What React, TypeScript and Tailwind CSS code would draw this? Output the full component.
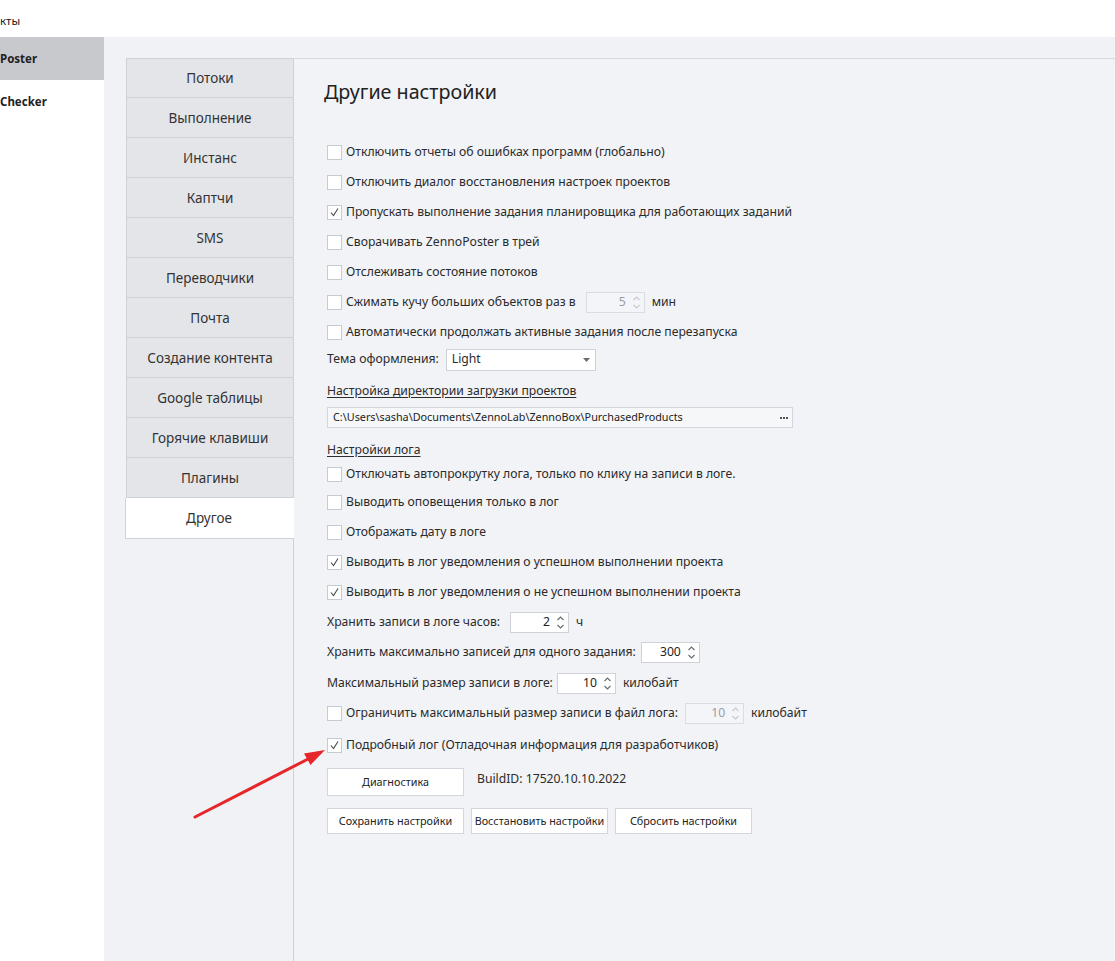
import React from 'react';

const font = { fontFamily: '"Noto Sans", "Open Sans", sans-serif' };

const tabs = [
  'Потоки',
  'Выполнение',
  'Инстанс',
  'Каптчи',
  'SMS',
  'Переводчики',
  'Почта',
  'Создание контента',
  'Google таблицы',
  'Горячие клавиши',
  'Плагины',
];

const CheckBox: React.FC<{ checked?: boolean }> = ({ checked }) => (
  <span className="w-[15px] h-[15px] bg-white border border-[#c6cad2] flex items-center justify-center shrink-0">
    {checked && (
      <svg width="11" height="11" viewBox="0 0 11 11">
        <polyline points="2,5.5 4.5,8.5 9,1.5" fill="none" stroke="#4a4a4a" strokeWidth="1.1" />
      </svg>
    )}
  </span>
);

const CheckRow: React.FC<{ label: string; checked?: boolean; children?: React.ReactNode }> = ({
  label,
  checked,
  children,
}) => (
  <div className="h-[30px] flex items-center">
    <CheckBox checked={checked} />
    <span className="ml-[4px]">{label}</span>
    {children}
  </div>
);

const Spin: React.FC<{ value: string; disabled?: boolean }> = ({ value, disabled }) => (
  <span
    className={`w-[59px] h-[21px] border flex items-center justify-end pr-[3px] ${
      disabled ? 'bg-[#f4f5f8] border-[#d9dce2] text-[#9a9ca2]' : 'bg-white border-[#cfd2d9] text-[#222]'
    }`}
  >
    <span className="mr-[6px]">{value}</span>
    <svg width="9" height="15" viewBox="0 0 9 15">
      <polyline points="1.5,5 4.5,2 7.5,5" fill="none" stroke={disabled ? '#c8c9cd' : '#6b6d72'} strokeWidth="1.2" />
      <polyline points="1.5,10 4.5,13 7.5,10" fill="none" stroke={disabled ? '#c8c9cd' : '#6b6d72'} strokeWidth="1.2" />
    </svg>
  </span>
);

const Btn: React.FC<{ label: string; tall?: boolean }> = ({ label, tall }) => (
  <button
    className={`w-[137px] ${tall ? 'h-[28px]' : 'h-[26px]'} bg-white border border-[#d3d6dc] text-[10.8px] text-[#222] whitespace-nowrap flex items-center justify-center`}
  >
    {label}
  </button>
);

export default function App() {
  return (
    <div className="relative w-[1115px] h-[961px] flex flex-col bg-white text-[12.2px] text-[#2b2b2b] overflow-hidden" style={font}>
      <div className="h-[37px] bg-white flex items-center pt-[4px] text-[11.5px] text-[#222]">кты</div>
      <div className="flex flex-1">
        <aside className="w-[104px] bg-white flex flex-col text-[11.5px] font-bold text-[#222]">
          <div className="h-[43px] bg-[#c8c9cc] flex items-center">Poster</div>
          <div className="h-[43px] flex items-center">Checker</div>
        </aside>
        <div className="flex-1 bg-[#f1f2f6] flex pt-[21px] pl-[21px]">
          <div className="w-[169px] flex flex-col text-[13.5px] text-[#333]">
            {tabs.map((t) => (
              <div
                key={t}
                className="h-[40px] ml-[1px] bg-[#e4e5e9] border border-t-0 first:border-t border-[#cdd1d9] flex items-center justify-center pt-[1px]"
              >
                {t}
              </div>
            ))}
            <div className="h-[41px] bg-white border border-r-0 border-[#cdd1d9] border-t-0 flex items-center justify-center pr-[2px] pt-[1px]">
              Другое
            </div>
            <div className="flex-1 border-r border-[#cdd1d9]" />
          </div>
          <main className="flex-1 bg-[#f2f3f7] border-t border-[#d8dbe1] pl-[33px] flex flex-col">
            <h1 className="text-[19.7px] text-[#222] mt-[19px] h-[28px] leading-[28px] -ml-[3px]">Другие настройки</h1>
            <div className="mt-[31px]" />
            <CheckRow label="Отключить отчеты об ошибках программ (глобально)" />
            <CheckRow label="Отключить диалог восстановления настроек проектов" />
            <CheckRow label="Пропускать выполнение задания планировщика для работающих заданий" checked />
            <CheckRow label="Сворачивать ZennoPoster в трей" />
            <CheckRow label="Отслеживать состояние потоков" />
            <CheckRow label="Сжимать кучу больших объектов раз в">
              <span className="ml-[10px]">
                <Spin value="5" disabled />
              </span>
              <span className="ml-[7px]">мин</span>
            </CheckRow>
            <CheckRow label="Автоматически продолжать активные задания после перезапуска" />
            <div className="h-[25px] flex items-center">
              <span>Тема оформления:</span>
              <span className="ml-[7px] w-[150px] h-[22px] bg-white border border-[#cfd2d9] flex items-center justify-between px-[5px]">
                <span>Light</span>
                <svg width="7" height="4" viewBox="0 0 7 4">
                  <polygon points="0,0 7,0 3.5,4" fill="#6b6d72" />
                </svg>
              </span>
            </div>
            <div className="h-[35px] flex items-center pt-[4px]">
              <span className="underline underline-offset-2">Настройка директории загрузки проектов</span>
            </div>
            <div className="w-[466px] h-[21px] bg-[#f6f7f9] border border-[#d3d6dc] flex items-center justify-between pl-[5px] pr-[4px] text-[10.8px] text-[#222]">
              <span>C:\Users\sasha\Documents\ZennoLab\ZennoBox\PurchasedProducts</span>
              <span className="flex gap-[1px]">
                <span className="w-[2px] h-[2px] bg-[#555]" />
                <span className="w-[2px] h-[2px] bg-[#555]" />
                <span className="w-[2px] h-[2px] bg-[#555]" />
              </span>
            </div>
            <div className="h-[34px] flex items-end pb-[3px]">
              <span className="underline underline-offset-2">Настройки лога</span>
            </div>
            <div className="h-[25px] flex items-center">
              <CheckBox />
              <span className="ml-[4px]">Отключать автопрокрутку лога, только по клику на записи в логе.</span>
            </div>
            <CheckRow label="Выводить оповещения только в лог" />
            <CheckRow label="Отображать дату в логе" />
            <CheckRow label="Выводить в лог уведомления о успешном выполнении проекта" checked />
            <CheckRow label="Выводить в лог уведомления о не успешном выполнении проекта" checked />
            <div className="h-[30px] flex items-center">
              <span>Хранить записи в логе часов:</span>
              <span className="ml-[10px]">
                <Spin value="2" />
              </span>
              <span className="ml-[7px]">ч</span>
            </div>
            <div className="h-[31px] flex items-center">
              <span>Хранить максимально записей для одного задания:</span>
              <span className="ml-[5px]">
                <Spin value="300" />
              </span>
            </div>
            <div className="h-[30px] flex items-center">
              <span>Максимальный размер записи в логе:</span>
              <span className="ml-[4px]">
                <Spin value="10" />
              </span>
              <span className="ml-[7px]">килобайт</span>
            </div>
            <CheckRow label="Ограничить максимальный размер записи в файл лога:">
              <span className="ml-[7px]">
                <Spin value="10" disabled />
              </span>
              <span className="ml-[7px]">килобайт</span>
            </CheckRow>
            <div className="h-[32px] flex items-center pt-[2px]">
              <CheckBox checked />
              <span className="ml-[4px]">Подробный лог (Отладочная информация для разработчиков)</span>
            </div>
            <div className="flex items-center mt-[8px] h-[28px]">
              <Btn label="Диагностика" tall />
              <span className="ml-[13px] -mt-[6px]">BuildID: 17520.10.10.2022</span>
            </div>
            <div className="flex gap-[7px] mt-[12px]">
              <Btn label="Сохранить настройки" />
              <Btn label="Восстановить настройки" />
              <Btn label="Сбросить настройки" />
            </div>
          </main>
        </div>
      </div>
      <svg className="absolute left-0 top-0 pointer-events-none" width="1115" height="961">
        <line x1="195" y1="817" x2="310" y2="758" stroke="#e5262a" strokeWidth="3" strokeLinecap="round" />
        <polygon points="325,750 304,753.5 310.5,765" fill="#e5262a" />
      </svg>
    </div>
  );
}
